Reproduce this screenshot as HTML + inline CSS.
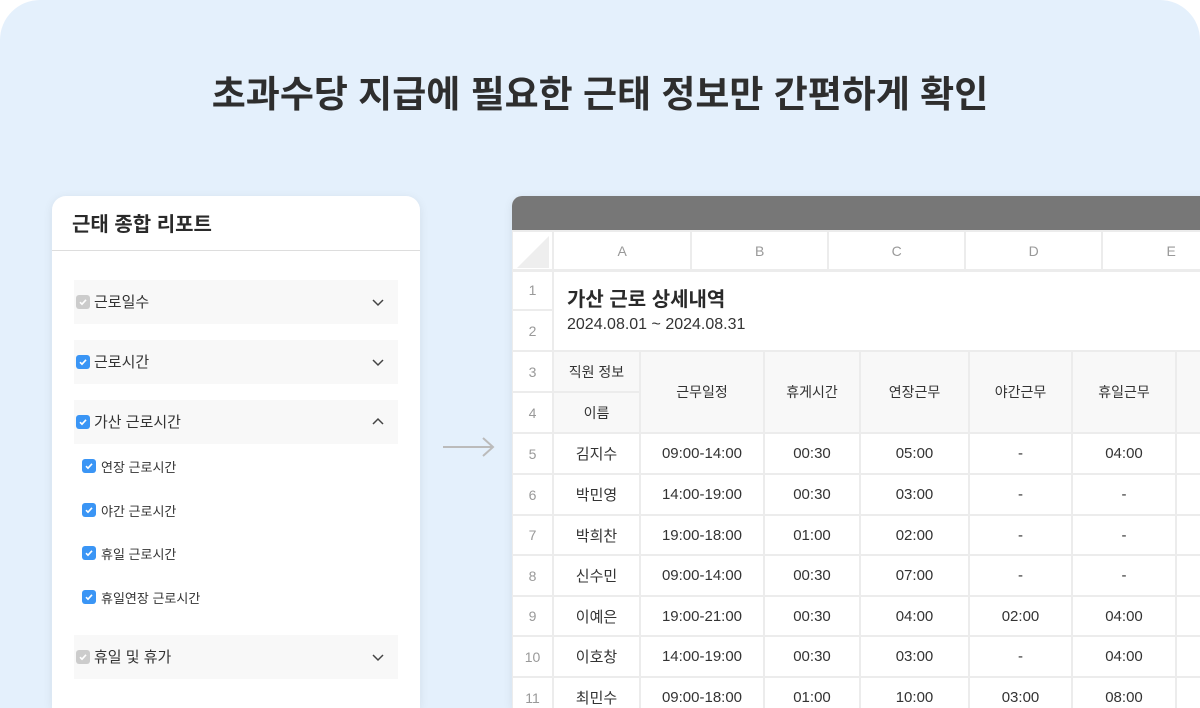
<!DOCTYPE html>
<html><head><meta charset="utf-8"><style>
*{box-sizing:border-box;margin:0;padding:0}
html,body{width:1200px;height:708px;overflow:hidden}
body{background:#fff;font-family:"Liberation Sans","Noto Sans CJK KR",sans-serif;position:relative}
.bg{position:absolute;left:0;top:0;width:1200px;height:708px;background:#e4f0fc;border-radius:40px 40px 0 0}
h1{position:absolute;top:64px;left:0;width:1200px;text-align:center;font-size:37px;font-weight:700;color:#2e2e2e}
.card{position:absolute;left:52px;top:196px;width:368px;height:512px;background:#fff;border-radius:14px 14px 0 0;box-shadow:0 2px 10px rgba(0,0,0,.08)}
.card .t{position:absolute;left:20px;top:12px;font-size:20px;font-weight:700;color:#2a2a2a}
.card .hr{position:absolute;left:0;top:54px;width:368px;height:1px;background:#ddd}
.row{position:absolute;left:22px;width:324px;height:44px;background:#f8f8f8}
.row span{position:absolute;left:20px;top:11px;font-size:15px;color:#333}
.cb{position:absolute;width:14px;height:14px;border-radius:3px;background:#3a95f5}
.cb.g{background:#ccc}
.cb svg{position:absolute;left:2px;top:2px}
.row .cb{left:2px;top:15px}
.chev{position:absolute;left:298px;top:16px}
.sub{position:absolute;left:30px;font-size:13px;color:#333}
.sub .cb{left:0;top:2px}
.sub span{position:absolute;left:19px;top:0;white-space:nowrap}
.sheet{position:absolute;left:512px;top:196px;width:700px;height:512px;background:#fff;border-radius:10px 0 0 0;overflow:hidden;box-shadow:0 2px 10px rgba(0,0,0,.08)}
.bar{height:34px;background:#777}
table{border-collapse:collapse;table-layout:fixed;position:absolute;left:0}
td{border:2px solid #ececec;text-align:center;color:#333;font-size:15px;white-space:nowrap;overflow:hidden}
.ch td{color:#999;font-size:14px;height:40px}
.rn{color:#999!important;font-size:14px!important}
.hd td.h{background:#f8f8f8;font-size:14px}
</style></head><body>
<div class="bg"></div>
<h1>초과수당 지급에 필요한 근태 정보만 간편하게 확인</h1>

<div class="card">
<div class="t">근태 종합 리포트</div>
<div class="hr"></div>
<div class="row" style="top:84px"><div class="cb g"><svg width="10" height="10" viewBox="0 0 10 10"><path d="M2 5.2l2 2 4-4.4" stroke="#fff" stroke-width="1.6" fill="none"/></svg></div><span>근로일수</span><svg class="chev" width="12" height="12" viewBox="0 0 12 12"><path d="M1 4l5 5 5-5" stroke="#444" stroke-width="1.5" fill="none"/></svg></div>
<div class="row" style="top:144px"><div class="cb"><svg width="10" height="10" viewBox="0 0 10 10"><path d="M2 5.2l2 2 4-4.4" stroke="#fff" stroke-width="1.6" fill="none"/></svg></div><span>근로시간</span><svg class="chev" width="12" height="12" viewBox="0 0 12 12"><path d="M1 4l5 5 5-5" stroke="#444" stroke-width="1.5" fill="none"/></svg></div>
<div class="row" style="top:204px"><div class="cb"><svg width="10" height="10" viewBox="0 0 10 10"><path d="M2 5.2l2 2 4-4.4" stroke="#fff" stroke-width="1.6" fill="none"/></svg></div><span>가산 근로시간</span><svg class="chev" width="12" height="12" viewBox="0 0 12 12"><path d="M1 8l5-5 5 5" stroke="#444" stroke-width="1.5" fill="none"/></svg></div>
<div class="sub" style="top:261px"><div class="cb"><svg width="10" height="10" viewBox="0 0 10 10"><path d="M2 5.2l2 2 4-4.4" stroke="#fff" stroke-width="1.6" fill="none"/></svg></div><span>연장 근로시간</span></div>
<div class="sub" style="top:305px"><div class="cb"><svg width="10" height="10" viewBox="0 0 10 10"><path d="M2 5.2l2 2 4-4.4" stroke="#fff" stroke-width="1.6" fill="none"/></svg></div><span>야간 근로시간</span></div>
<div class="sub" style="top:348px"><div class="cb"><svg width="10" height="10" viewBox="0 0 10 10"><path d="M2 5.2l2 2 4-4.4" stroke="#fff" stroke-width="1.6" fill="none"/></svg></div><span>휴일 근로시간</span></div>
<div class="sub" style="top:392px"><div class="cb"><svg width="10" height="10" viewBox="0 0 10 10"><path d="M2 5.2l2 2 4-4.4" stroke="#fff" stroke-width="1.6" fill="none"/></svg></div><span>휴일연장 근로시간</span></div>
<div class="row" style="top:439px"><div class="cb g"><svg width="10" height="10" viewBox="0 0 10 10"><path d="M2 5.2l2 2 4-4.4" stroke="#fff" stroke-width="1.6" fill="none"/></svg></div><span>휴일 및 휴가</span><svg class="chev" width="12" height="12" viewBox="0 0 12 12"><path d="M1 4l5 5 5-5" stroke="#444" stroke-width="1.5" fill="none"/></svg></div>
</div>

<svg style="position:absolute;left:442px;top:435px" width="54" height="24" viewBox="0 0 54 24"><path d="M1 12h50M41 3l10 9-10 9" stroke="#bbb" stroke-width="2" fill="none"/></svg>

<div class="sheet">
<div class="bar"></div>
<table class="ch" style="top:34px;left:-1px;width:730px">
<colgroup><col style="width:41px"><col style="width:136px"><col style="width:136px"><col style="width:135px"><col style="width:136px"><col style="width:136px"></colgroup>
<tr><td style="position:relative"><svg style="position:absolute;left:4px;top:4px" width="32" height="32"><path d="M32 0V32H0Z" fill="#eee"/></svg></td><td>A</td><td>B</td><td>C</td><td>D</td><td>E</td></tr>
</table>
<table class="hd" style="top:73px;left:-1px;width:760px">
<colgroup><col style="width:41px"><col style="width:87px"><col style="width:124px"><col style="width:96px"><col style="width:109px"><col style="width:103px"><col style="width:104px"><col style="width:96px"></colgroup>
<tr style="height:40px"><td class="rn">1</td><td colspan="7" rowspan="2" style="text-align:left;padding-left:13px"><div style="font-size:20px;font-weight:700;color:#2a2a2a;line-height:28px">가산 근로 상세내역</div><div style="font-size:16px;color:#333;line-height:22px">2024.08.01 ~ 2024.08.31</div></td></tr>
<tr style="height:41px"><td class="rn">2</td></tr>
<tr style="height:41px"><td class="rn">3</td><td class="h">직원 정보</td><td class="h" rowspan="2">근무일정</td><td class="h" rowspan="2">휴게시간</td><td class="h" rowspan="2">연장근무</td><td class="h" rowspan="2">야간근무</td><td class="h" rowspan="2">휴일근무</td><td class="h" rowspan="2"></td></tr>
<tr style="height:41px"><td class="rn">4</td><td class="h">이름</td></tr>
<tr style="height:41px"><td class="rn">5</td><td>김지수</td><td>09:00-14:00</td><td>00:30</td><td>05:00</td><td>-</td><td>04:00</td><td></td></tr>
<tr style="height:41px"><td class="rn">6</td><td>박민영</td><td>14:00-19:00</td><td>00:30</td><td>03:00</td><td>-</td><td>-</td><td></td></tr>
<tr style="height:40px"><td class="rn">7</td><td>박희찬</td><td>19:00-18:00</td><td>01:00</td><td>02:00</td><td>-</td><td>-</td><td></td></tr>
<tr style="height:41px"><td class="rn">8</td><td>신수민</td><td>09:00-14:00</td><td>00:30</td><td>07:00</td><td>-</td><td>-</td><td></td></tr>
<tr style="height:40px"><td class="rn">9</td><td>이예은</td><td>19:00-21:00</td><td>00:30</td><td>04:00</td><td>02:00</td><td>04:00</td><td></td></tr>
<tr style="height:41px"><td class="rn">10</td><td>이호창</td><td>14:00-19:00</td><td>00:30</td><td>03:00</td><td>-</td><td>04:00</td><td></td></tr>
<tr style="height:41px"><td class="rn">11</td><td>최민수</td><td>09:00-18:00</td><td>01:00</td><td>10:00</td><td>03:00</td><td>08:00</td><td></td></tr>
</table>
</div>
</body></html>
